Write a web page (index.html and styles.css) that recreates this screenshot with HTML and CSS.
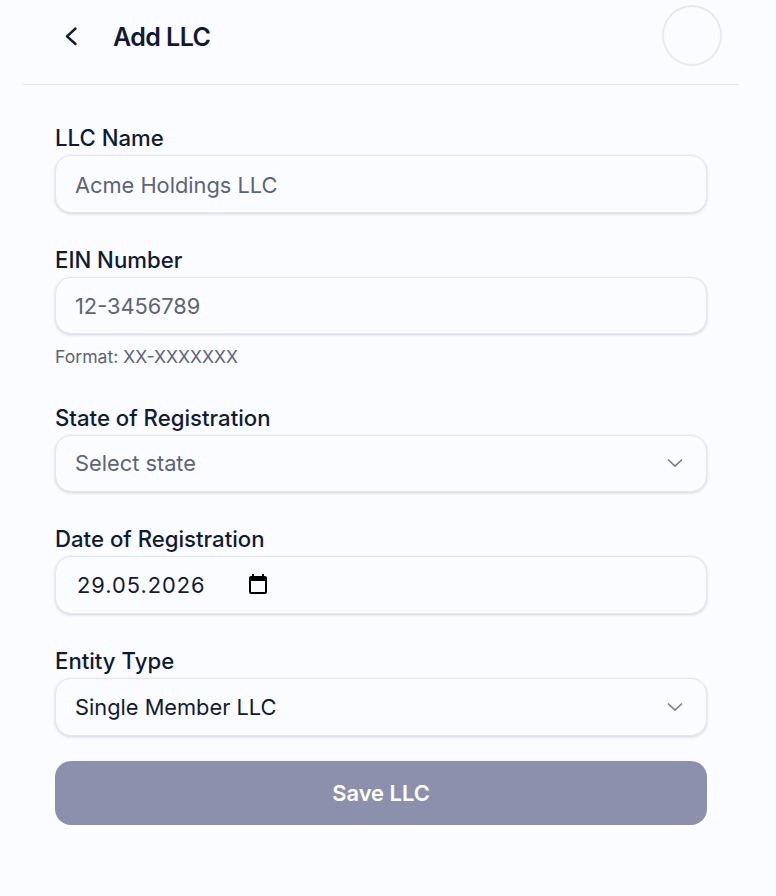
FILE: index.html
```html
<!DOCTYPE html>
<html lang="en">
<head>
<meta charset="utf-8">
<title>Add LLC</title>
<link rel="stylesheet" href="styles.css">
</head>
<body>
<div class="page">
  <header class="header">
    <div class="header-left">
      <button class="back" type="button" aria-label="Back">
        <svg width="24" height="24" viewBox="0 0 24 24" fill="none" stroke="#111a33" stroke-width="2.4" stroke-linecap="round" stroke-linejoin="round"><path d="M16.500 4.500 8 12.300l8.500 7.700"/></svg>
      </button>
      <h1 class="title">Add LLC</h1>
    </div>
    <div class="avatar"></div>
  </header>
  <form class="form">
    <div class="field">
      <div class="label">LLC Name</div>
      <div class="control muted">Acme Holdings LLC</div>
    </div>
    <div class="field">
      <div class="label">EIN Number</div>
      <div class="control muted">12-3456789</div>
      <div class="hint">Format: XX-XXXXXXX</div>
    </div>
    <div class="field">
      <div class="label">State of Registration</div>
      <div class="control muted select">
        <span>Select state</span>
        <svg class="chev" width="18" height="18" viewBox="0 0 18 18" fill="none" stroke="#7b8190" stroke-width="1.7" stroke-linecap="round" stroke-linejoin="round"><path d="M2.500 6 9 12.200 15.500 6"/></svg>
      </div>
    </div>
    <div class="field">
      <div class="label">Date of Registration</div>
      <div class="control date">
        <span class="date-text">29.05.2026</span>
        <svg class="cal" width="24" height="24" viewBox="0 0 24 24" fill="#000"><path d="M19 3h-1V1h-2v2H8V1H6v2H5a2 2 0 0 0-2 2v14a2 2 0 0 0 2 2h14a2 2 0 0 0 2-2V5a2 2 0 0 0-2-2zm0 16H5V8h14v11z"/></svg>
      </div>
    </div>
    <div class="field">
      <div class="label">Entity Type</div>
      <div class="control select">
        <span>Single Member LLC</span>
        <svg class="chev" width="18" height="18" viewBox="0 0 18 18" fill="none" stroke="#7b8190" stroke-width="1.7" stroke-linecap="round" stroke-linejoin="round"><path d="M2.500 6 9 12.200 15.500 6"/></svg>
      </div>
    </div>
    <button class="save" type="button">Save LLC</button>
  </form>
</div>
</body>
</html>
```
FILE: styles.css
```css
* { box-sizing: border-box; }
html, body { margin: 0; padding: 0; }
body {
  height: 896px;
  background: #fbfcff;
  font-family: Inter, "Liberation Sans", sans-serif;
  color: #111a33;
  overflow: hidden;
}
.page { padding: 0 37px 0 23px; }
.header {
  height: 85px;
  border-bottom: 1px solid #e4e6ee;
  display: flex;
  align-items: center;
  justify-content: space-between;
  padding: 0 17px 13px 36px;
}
.header-left { display: flex; align-items: center; }
.back {
  width: 24px; height: 24px; padding: 0; border: 0; background: none;
  display: flex; margin-right: 30px;
}
.title { margin: 2px 0 0; font-size: 25px; line-height: 32px; font-weight: 600; letter-spacing: -0.55px; }
.avatar { width: 60px; height: 61px; border-radius: 50%; border: 2px solid #e8e9f1; }
.form { padding: 39px 32px 0; display: flex; flex-direction: column; }
.field { margin-bottom: 33.100px; }
.label { font-size: 22.200px; line-height: 28px; font-weight: 500; margin-bottom: 3px; }
.control {
  height: 57.600px;
  border: 1px solid #e5e7ef;
  border-radius: 16px;
  background: #fbfcff;
  box-shadow: 0 1px 3px rgba(30, 35, 70, 0.18);
  padding: 2px 19px 0;
  font-size: 21.800px;
  display: flex;
  align-items: center;
}
.muted { color: #5b6478; }
.select { justify-content: space-between; padding: 0 22px 0 19px; }
.date { padding-top: 0; }
.date-text { margin-left: 2px; letter-spacing: 1px; margin-right: 40px; }
.hint { font-size: 17.600px; line-height: 22px; color: #5b6478; margin-top: 12px; margin-bottom: 2.300px; }
.save {
  height: 64px;
  margin-top: -7.800px;
  border: 0;
  border-radius: 16px;
  background: #8c90ad;
  color: #fff;
  font: 600 21.900px Inter, "Liberation Sans", sans-serif;
}
```
